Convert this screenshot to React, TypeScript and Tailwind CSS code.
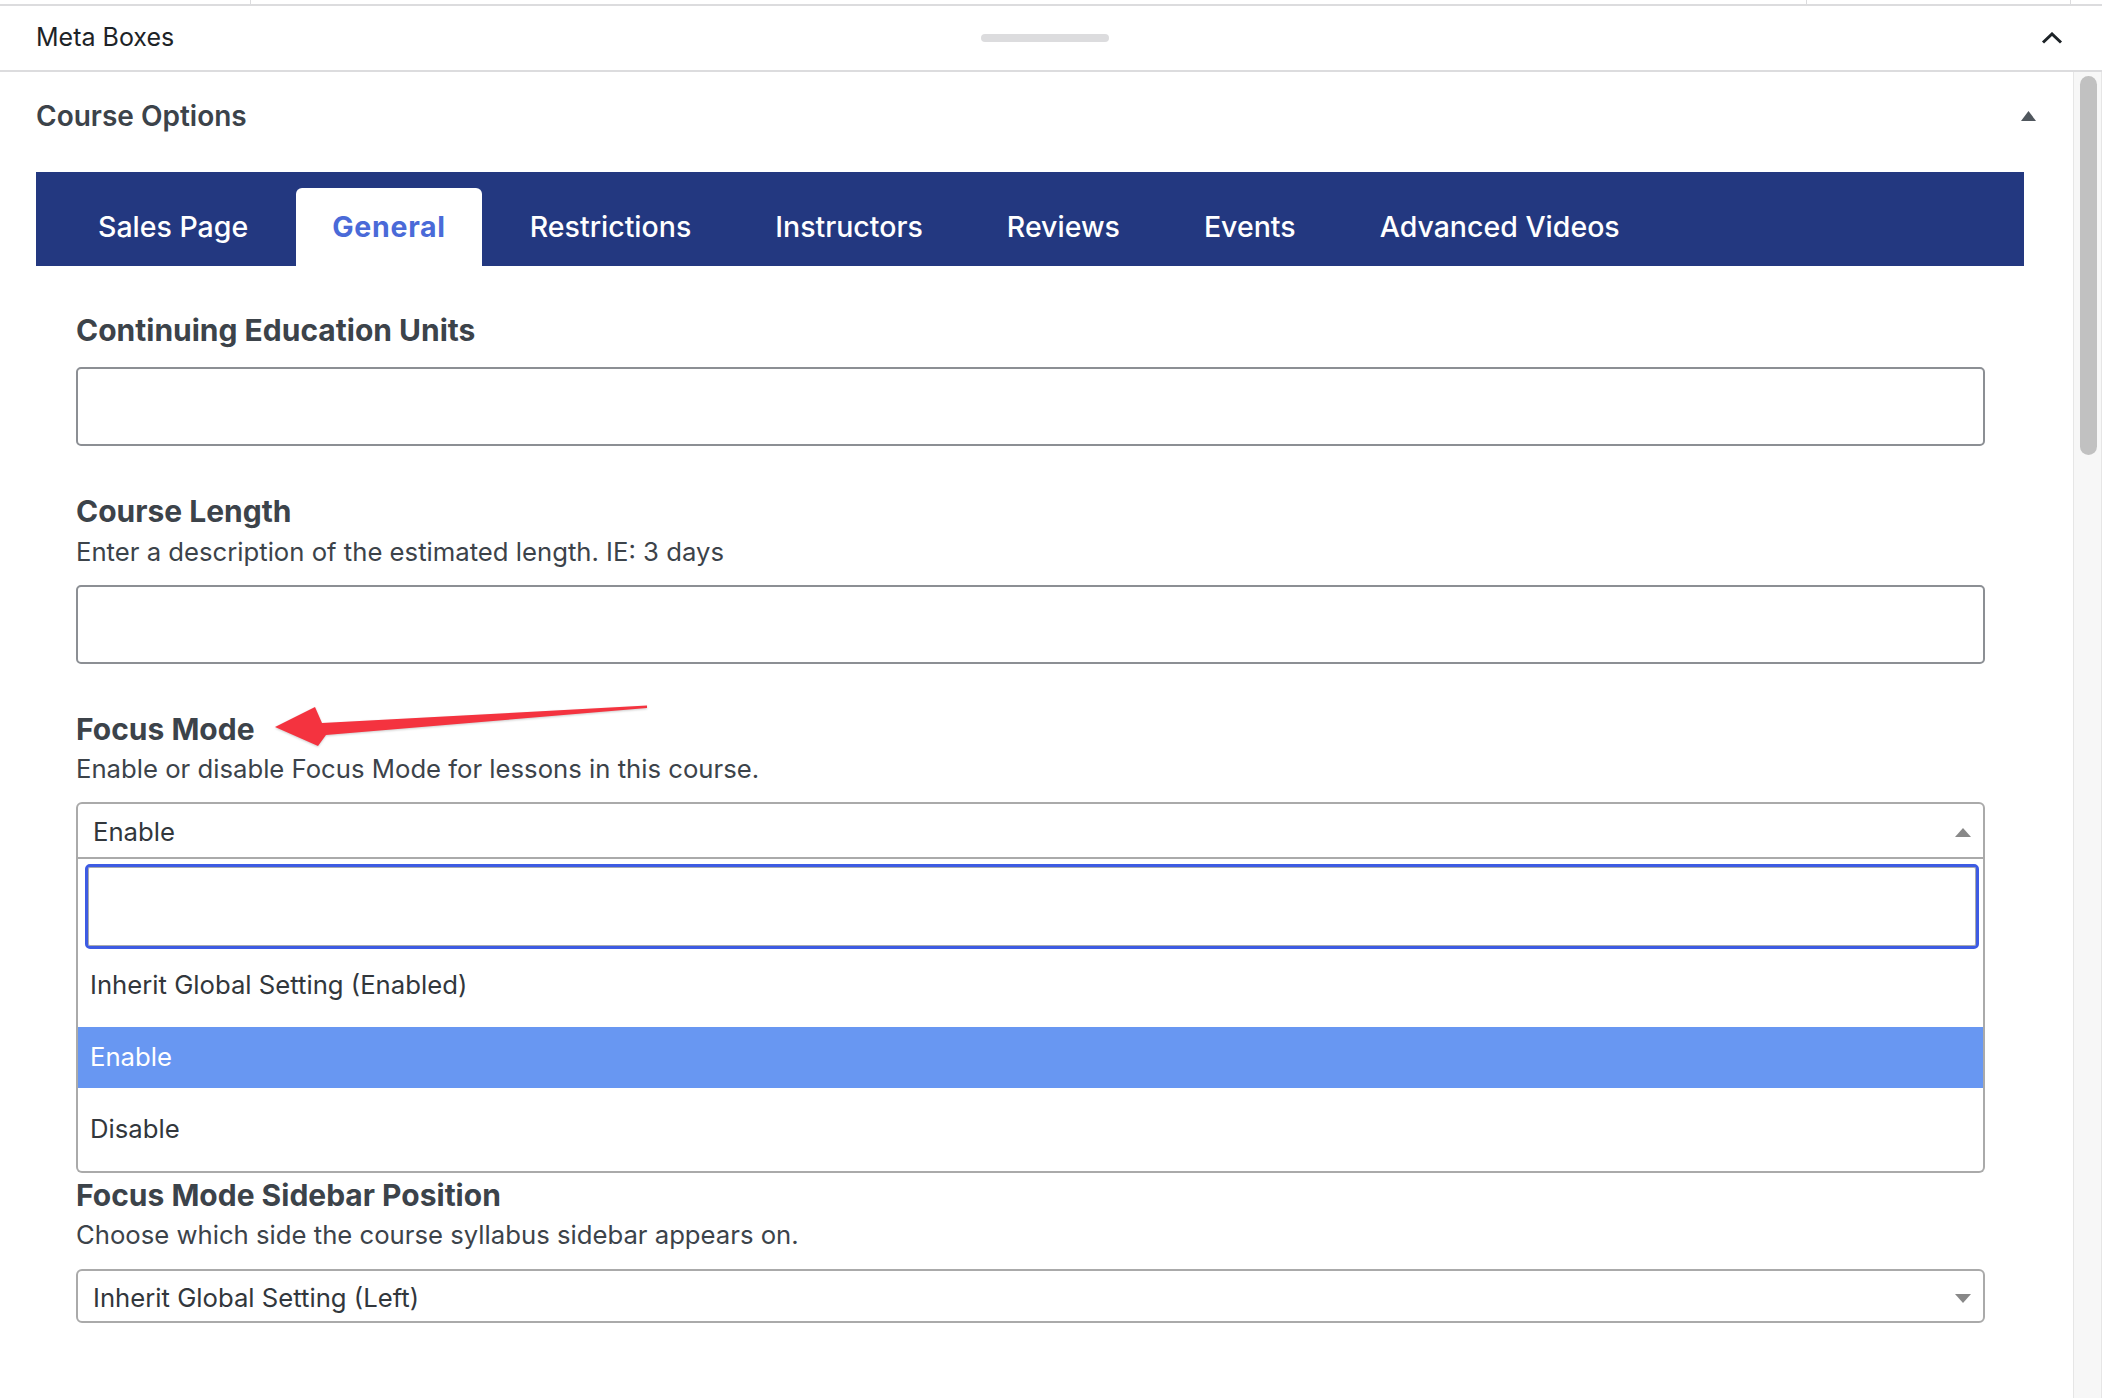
import React from 'react';

const tabs = ['Sales Page', 'General', 'Restrictions', 'Instructors', 'Reviews', 'Events', 'Advanced Videos'];

const options = [
  { label: 'Inherit Global Setting (Enabled)', selected: false },
  { label: 'Enable', selected: true },
  { label: 'Disable', selected: false },
];

function Caret({ up }: { up?: boolean }) {
  return (
    <svg width="16" height="9" viewBox="0 0 16 9" className="shrink-0">
      <path d={up ? 'M0 9 L8 0 L16 9 Z' : 'M0 0 L8 9 L16 0 Z'} fill="#888888" />
    </svg>
  );
}

export default function App() {
  return (
    <div className="relative w-[2102px] h-[1398px] overflow-hidden bg-white font-[Inter,sans-serif] text-[#3c434a]">
      {/* top strip with column dividers */}
      <div className="flex h-[6px] border-b-2 border-[#dcdcde]">
        <div className="w-[251px] border-r border-[#dcdcde]" />
        <div className="w-[1556px] border-r border-[#dcdcde]" />
        <div className="w-[264px] border-r border-[#dcdcde]" />
      </div>

      {/* Meta Boxes header */}
      <div className="flex h-[66px] items-center border-b-2 border-[#dcdcde]">
        <div className="w-[981px] pl-[36px] text-[25px] text-[#1d2327]">Meta Boxes</div>
        <div className="h-[8px] w-[128px] rounded-full bg-[#dcdcde]" />
        <div className="flex flex-1 justify-end pr-[39px]">
          <svg width="22" height="12" viewBox="0 0 22 12">
            <path d="M2 10.5 L11 2 L20 10.5" fill="none" stroke="#1d2327" strokeWidth="3" />
          </svg>
        </div>
      </div>

      <div className="flex h-[1326px]">
        {/* main content */}
        <div className="w-[2073px]">
          <div className="flex items-center justify-between pl-[36px] pr-[37px] pt-[27px]">
            <h2 className="text-[28px] leading-[34px] font-semibold text-[#3c434a]">Course Options</h2>
            <svg width="15" height="10" viewBox="0 0 15 10">
              <path d="M0 10 L7.5 0 L15 10 Z" fill="#50575e" />
            </svg>
          </div>

          <div className="pl-[36px] pr-[49px]">
            {/* tab bar */}
            <div className="mt-[39px] flex h-[94px] items-end gap-[12px] bg-[#233880] pl-[26px]">
              {tabs.map((t) =>
                t === 'General' ? (
                  <div
                    key={t}
                    className="flex h-[78px] items-center rounded-t-[6px] bg-white px-[36px] text-[28.5px] font-bold tracking-[0.025em] text-[#4a6ad8]"
                  >
                    {t}
                  </div>
                ) : (
                  <div key={t} className="flex h-[78px] items-center px-[36px] text-[28.5px] font-medium text-white">
                    {t}
                  </div>
                )
              )}
            </div>

            {/* fields */}
            <div className="pl-[40px] pr-[39px]">
              <h3 className="mt-[47px] text-[30px] leading-[34px] font-bold">Continuing Education Units</h3>
              <div className="mt-[20px] h-[79px] rounded-[5px] border-2 border-[#8c8f94] bg-white" />

              <h3 className="mt-[48px] text-[30px] leading-[34px] font-bold">Course Length</h3>
              <p className="mt-[9px] text-[25.7px] leading-[30px]">Enter a description of the estimated length. IE: 3 days</p>
              <div className="mt-[18px] h-[79px] rounded-[5px] border-2 border-[#8c8f94] bg-white" />

              <h3 className="mt-[48px] text-[30px] leading-[34px] font-bold">Focus Mode</h3>
              <p className="mt-[8px] text-[25.7px] leading-[30px]">Enable or disable Focus Mode for lessons in this course.</p>

              {/* open select */}
              <div className="mt-[18px]">
                <div className="flex h-[57px] items-center justify-between rounded-t-[6px] border-2 border-[#aaaaaa] pl-[15px] pr-[12px] pt-[4px]">
                  <span className="text-[25.7px] text-[#32373c]">Enable</span>
                  <Caret up />
                </div>
                <div className="rounded-b-[6px] border-2 border-t-0 border-[#aaaaaa] pb-[11px]">
                  <div className="pl-[7px] pr-[4px] pt-[5px]">
                    <div className="h-[85px] rounded-[5px] border-[3px] border-[#3d5be3] shadow-[inset_0_0_0_1px_#a7aaad]" />
                  </div>
                  <div className="mt-[6px] flex flex-col gap-[11px]">
                    {options.map((o) => (
                      <div
                        key={o.label}
                        className={
                          o.selected
                            ? 'flex h-[61px] items-center bg-[#6897f2] pl-[12px] text-[25.7px] text-white'
                            : 'flex h-[61px] items-center pl-[12px] text-[25.7px] text-[#32373c]'
                        }
                      >
                        {o.label}
                      </div>
                    ))}
                  </div>
                </div>
              </div>

              <h3 className="mt-[5px] text-[30px] leading-[34px] font-bold">Focus Mode Sidebar Position</h3>
              <p className="mt-[8px] text-[25.7px] leading-[30px]">Choose which side the course syllabus sidebar appears on.</p>
              <div className="mt-[19px] flex h-[54px] items-center justify-between rounded-[6px] border-2 border-[#aaaaaa] pl-[15px] pr-[12px] pt-[4px]">
                <span className="text-[25.7px] text-[#32373c]">Inherit Global Setting (Left)</span>
                <Caret />
              </div>
            </div>
          </div>
        </div>

        {/* scrollbar */}
        <div className="w-[29px] border-l border-r border-[#e6e6e6] bg-[#f7f7f7] pl-[6px] pt-[4px]">
          <div className="h-[379px] w-[17px] rounded-full bg-[#c1c1c1]" />
        </div>
      </div>

      {/* annotation arrow */}
      <svg
        className="pointer-events-none absolute left-[270px] top-[700px] drop-shadow-[0_1px_1px_rgba(0,0,0,0.2)]"
        width="385"
        height="52"
        viewBox="0 0 385 52"
      >
        <polygon points="5,27 45,7 52,23 377,5.5 377,8 56,35 48,46" fill="#f4333f" />
      </svg>
    </div>
  );
}
